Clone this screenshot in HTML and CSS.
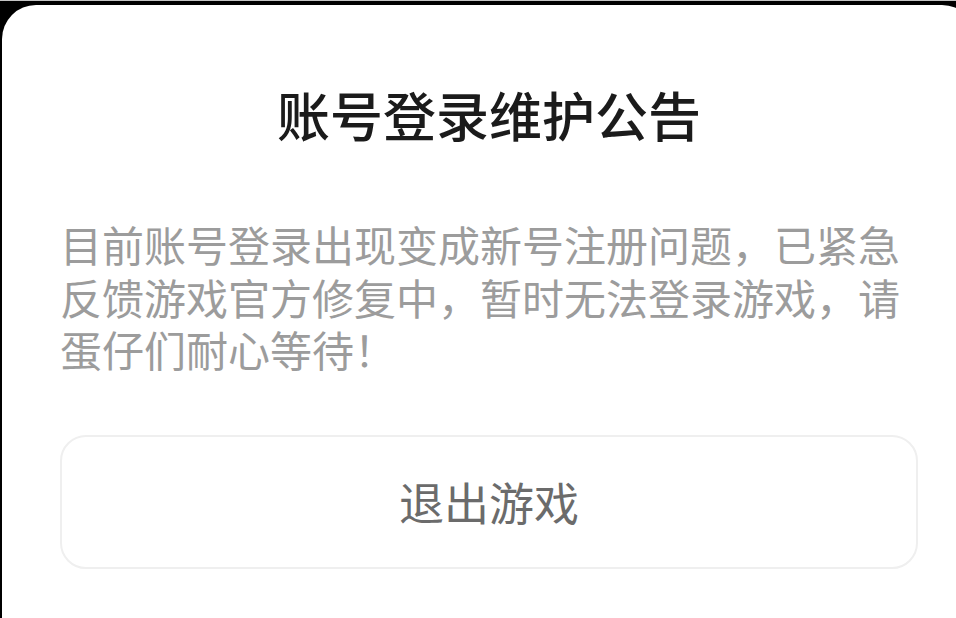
FILE: index.html
```html
<!DOCTYPE html>
<html lang="zh-CN">
<head>
  <meta charset="UTF-8">
  <title>账号登录维护公告</title>
  <link rel="stylesheet" href="styles.css">
</head>
<body>
  <div class="notice">
    <h1 class="notice-title">账号登录维护公告</h1>
    <p class="notice-text">目前账号登录出现变成新号注册问题，已紧急反馈游戏官方修复中，暂时无法登录游戏，请蛋仔们耐心等待！</p>
    <button class="notice-btn">退出游戏</button>
  </div>
</body>
</html>
```

FILE: styles.css
```css
html, body {
  height: 100%;
}
body {
  margin: 0;
  background-color: #000;
  border-top: 1px solid #c4c4c4;
  overflow: hidden;
  font-family: "Noto Sans CJK SC", "Noto Sans", sans-serif;
}

.notice {
  box-sizing: border-box;
  width: 974px;
  min-height: 660px;
  margin: 4px 0 0 2px;
  padding: 77px 58px 60px;
  background-color: #fff;
  border-radius: 34px;
}
.notice-title {
  margin: 0;
  font-size: 53px;
  line-height: 64px;
  font-weight: 500;
  color: #1b1b1b;
  text-align: center;
}
.notice-text {
  margin: 72px 0 0;
  font-size: 42px;
  line-height: 52.5px;
  color: #9c9c9c;
}
.notice-btn {
  display: block;
  box-sizing: border-box;
  width: 100%;
  height: 134px;
  margin-top: 59px;
  background-color: #fff;
  border: 2px solid #efefef;
  border-radius: 26px;
  font-family: inherit;
  font-size: 45px;
  color: #6b6b6b;
}
```
